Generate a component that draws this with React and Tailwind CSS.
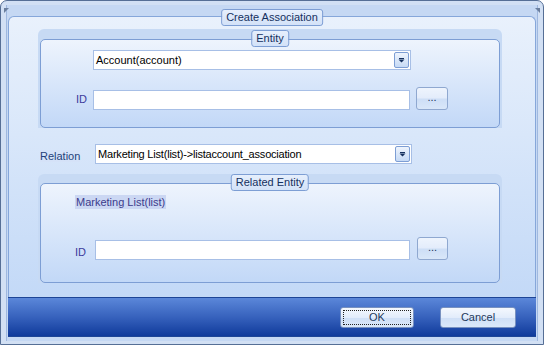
import React from 'react';

// Create Association dialog (Office 2007 blue skin)

const DropButton = () => (
  <span className="flex h-[16px] w-[15px] items-center justify-center rounded-[2px] border border-[#7d9ed4] bg-gradient-to-b from-[#eef4fd] to-[#c6daf5]">
    <svg width="7" height="5" viewBox="0 0 7 5">
      <path d="M1 0h5v1H1z M0.5 1.5h6L3.5 4.5z" fill="#15305e" />
    </svg>
  </span>
);

const ComboBox = ({ value, width, tight }) => (
  <div
    className={`flex h-[20px] ${width} items-center justify-between border border-[#a7bfe6] bg-white pl-[2px] pr-[1px] text-[11px] text-black`}
  >
    <span className={`leading-none ${tight ? 'tracking-[-0.2px]' : ''}`}>{value}</span>
    <DropButton />
  </div>
);

const TextBox = ({ width }) => (
  <input
    readOnly
    className={`h-[20px] ${width} border border-[#a7bfe6] bg-white outline-none`}
  />
);

const DotsButton = ({ width }) => (
  <button
    className={`flex h-[23px] ${width} items-center justify-center rounded-[3px] border border-[#8fa8d0] bg-[linear-gradient(#eef4fd,#e3ecfb_48%,#cddef6_52%,#d9e7f9)] pb-[3px] text-[11px] leading-none text-[#1e395b]`}
  >
    ...
  </button>
);

const Group = ({ title, band, titleTop, children }) => (
  <div className={`relative rounded-t-[6px] bg-[#c7daf4] px-[2px] ${band}`}>
    <div
      className={`absolute left-1/2 ${titleTop} h-[17px] -translate-x-1/2 whitespace-nowrap rounded-[3px] border border-[#7d9ed4] bg-gradient-to-b from-[#e6effc] to-[#d3e2f8] px-[4px] text-[11px] leading-[15px] text-[#15305e]`}
    >
      {title}
    </div>
    <div className="rounded-[5px] border border-[#7d9ed4] bg-gradient-to-b from-[#eef4fd] to-[#c2d8f7]">
      {children}
    </div>
  </div>
);

const DialogButton = ({ label, width, focused }) => (
  <button
    className={`relative h-[21px] ${width} rounded-[3px] border border-[#7891c0] bg-[linear-gradient(#f4f8fe,#e2ecfb_50%,#cfdff6_52%,#dbe8f9)] text-[11px] text-[#1e395b]`}
  >
    {focused && (
      <span className="absolute inset-[2px] border border-dotted border-[#222]" />
    )}
    {label}
  </button>
);

export default function App() {
  return (
    <div className="relative h-[345px] w-[544px] overflow-hidden rounded-t-[7px] border border-[#566f96] bg-[#d2e0f4] px-[5px] pb-[3px] pt-[4px] font-['Liberation_Sans',Arial,sans-serif]">
      <svg className="absolute left-[3px] top-[7px]" width="5" height="5" viewBox="0 0 5 5">
        <path d="M0 0h5L0 5z" fill="#6b7f9e" />
      </svg>
      <svg className="absolute right-[3px] top-[7px]" width="5" height="5" viewBox="0 0 5 5">
        <path d="M0 0h5v5z" fill="#6b7f9e" />
      </svg>

      <div className="flex h-full flex-col border-x border-[#9fb8df] bg-[#c5d8f3] px-[1px] pt-[11px]">
        {/* main group */}
        <div className="relative flex flex-1 flex-col rounded-t-[6px] border-x border-t border-[#86a7da] bg-gradient-to-b from-[#e9f1fc] to-[#c3d9f7] pl-[29px] pr-[33px] pt-[12px]">
          <div className="absolute left-1/2 top-[-8px] h-[17px] -translate-x-1/2 whitespace-nowrap rounded-[3px] border border-[#7d9ed4] bg-gradient-to-b from-[#e6effc] to-[#d3e2f8] px-[4px] text-[11px] leading-[15px] text-[#15305e]">
            Create Association
          </div>

          <Group title="Entity" band="pt-[10px]" titleTop="top-[1px]">
            <div className="flex flex-col gap-[17px] pb-[17px] pt-[10px]">
              <div className="flex pl-[52px]">
                <ComboBox value="Account(account)" width="w-[318px]" />
              </div>
              <div className="flex items-end pl-[35px]">
                <span className="w-[17px] self-center text-[11px] leading-[14px] text-[#3c3c9c]">ID</span>
                <TextBox width="w-[317px]" />
                <span className="w-[6px]" />
                <DotsButton width="w-[32px]" />
              </div>
            </div>
          </Group>

          <div className="mt-[16px] flex items-start pl-[2px]">
            <span className="mt-[5px] w-[55px] text-[11px] leading-[14px] text-[#233f7a]">
              <span className="bg-[#d5e2f8]">Relation</span>
            </span>
            <ComboBox value="Marketing List(list)->listaccount_association" width="w-[317px]" tight />
          </div>

          <Group title="Related Entity" band="mt-[10px] pt-[9px]" titleTop="top-0">
            <div className="flex flex-col pb-[22px] pt-[11px]">
              <div className="flex h-[14px] pl-[34px] text-[11px] leading-[14px]">
                <span className="bg-[#cbd7f3] px-[1px] text-[#3c3c8c]">
                  Marketing List(list)
                </span>
              </div>
              <div className="mt-[28px] flex items-end pl-[34px]">
                <span className="mb-[1px] w-[20px] text-[11px] leading-[14px] text-[#3c3c9c]">ID</span>
                <TextBox width="w-[315px]" />
                <span className="w-[7px]" />
                <DotsButton width="w-[31px]" />
              </div>
            </div>
          </Group>
        </div>

        {/* footer */}
        <div className="flex h-[40px] items-start justify-end gap-[26px] border-y border-[#1d4596] bg-gradient-to-b from-[#5b87d9] via-[#3762bd] to-[#0f3a9b] pr-[20px] pt-[9px]">
          <DialogButton label="OK" width="w-[74px]" focused />
          <DialogButton label="Cancel" width="w-[76px]" />
        </div>
        <div className="h-[4px]" />
      </div>
    </div>
  );
}
